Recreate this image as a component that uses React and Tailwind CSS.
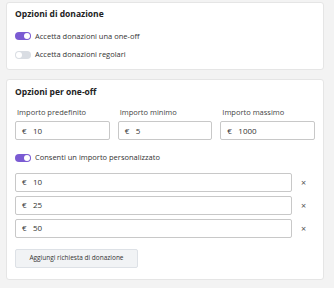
import { useState } from "react";

function Toggle({ on }) {
  return (
    <span
      className={
        "relative inline-block h-[8px] w-[16px] shrink-0 rounded-full " +
        (on ? "bg-[#7b5bd3]" : "bg-[#d9dde3]")
      }
    >
      <span
        className={
          "absolute top-[1px] h-[6px] w-[6px] rounded-full bg-white " +
          (on ? "right-[1px]" : "left-[1px]")
        }
      />
    </span>
  );
}

function Amount({ value }) {
  return (
    <div className="flex h-[19px] items-center rounded-[2px] border border-[#c8c8c8] bg-white px-[6px] text-[8px] text-[#333]">
      <span className="w-[10px]">€</span>
      <span className="ml-[1px]">{value}</span>
    </div>
  );
}

function App() {
  const [amounts] = useState(["10", "25", "50"]);

  return (
    <div
      className="h-[288px] w-[334px] overflow-hidden bg-[#f3f3f3] pt-[2px] pl-[6px] text-[#333]"
      style={{ fontFamily: '"Open Sans", sans-serif' }}
    >
      <div className="w-[318px] rounded-[3px] border border-[#e5e5e5] bg-white px-[8px] pt-[5px] pb-[9px]">
        <h2 className="text-[8.5px] font-bold text-[#222]">Opzioni di donazione</h2>
        <div className="mt-[10px] flex items-center gap-[4px] text-[7.5px]">
          <Toggle on />
          <span>Accetta donazioni una one-off</span>
        </div>
        <div className="mt-[7px] flex items-center gap-[4px] text-[7.5px]">
          <Toggle />
          <span>Accetta donazioni regolari</span>
        </div>
      </div>

      <div className="mt-[9px] w-[318px] rounded-[3px] border border-[#e5e5e5] bg-white px-[8px] pt-[6px] pb-[11px]">
        <h2 className="text-[8.5px] font-bold text-[#222]">Opzioni per one-off</h2>
        <div className="mt-[8px] grid grid-cols-3 gap-[8px]">
          {[
            ["Importo predefinito", "10"],
            ["Importo minimo", "5"],
            ["Importo massimo", "1000"],
          ].map(([label, v]) => (
            <div key={label}>
              <div className="mb-[3px] pl-[2px] text-[7.5px] text-[#444]">{label}</div>
              <Amount value={v} />
            </div>
          ))}
        </div>
        <div className="mt-[12px] flex items-center gap-[4px] text-[7.5px]">
          <Toggle on />
          <span>Consenti un importo personalizzato</span>
        </div>
        <div className="mt-[9px] flex flex-col gap-[4px]">
          {amounts.map((a) => (
            <div key={a} className="flex items-center">
              <div className="w-[277px]">
                <Amount value={a} />
              </div>
              <span className="ml-[9px] text-[9px] leading-none text-[#555]">×</span>
            </div>
          ))}
        </div>
        <button
          type="button"
          className="mt-[11px] h-[19px] w-[123px] rounded-[2px] border border-[#dde1e6] bg-[#f1f3f5] text-[6.5px] text-[#333]"
        >
          Aggiungi richiesta di donazione
        </button>
      </div>

      <div className="mt-[9px] h-[20px] w-[318px] rounded-[3px] border border-[#e5e5e5] bg-white" />
    </div>
  );
}

export default App;
